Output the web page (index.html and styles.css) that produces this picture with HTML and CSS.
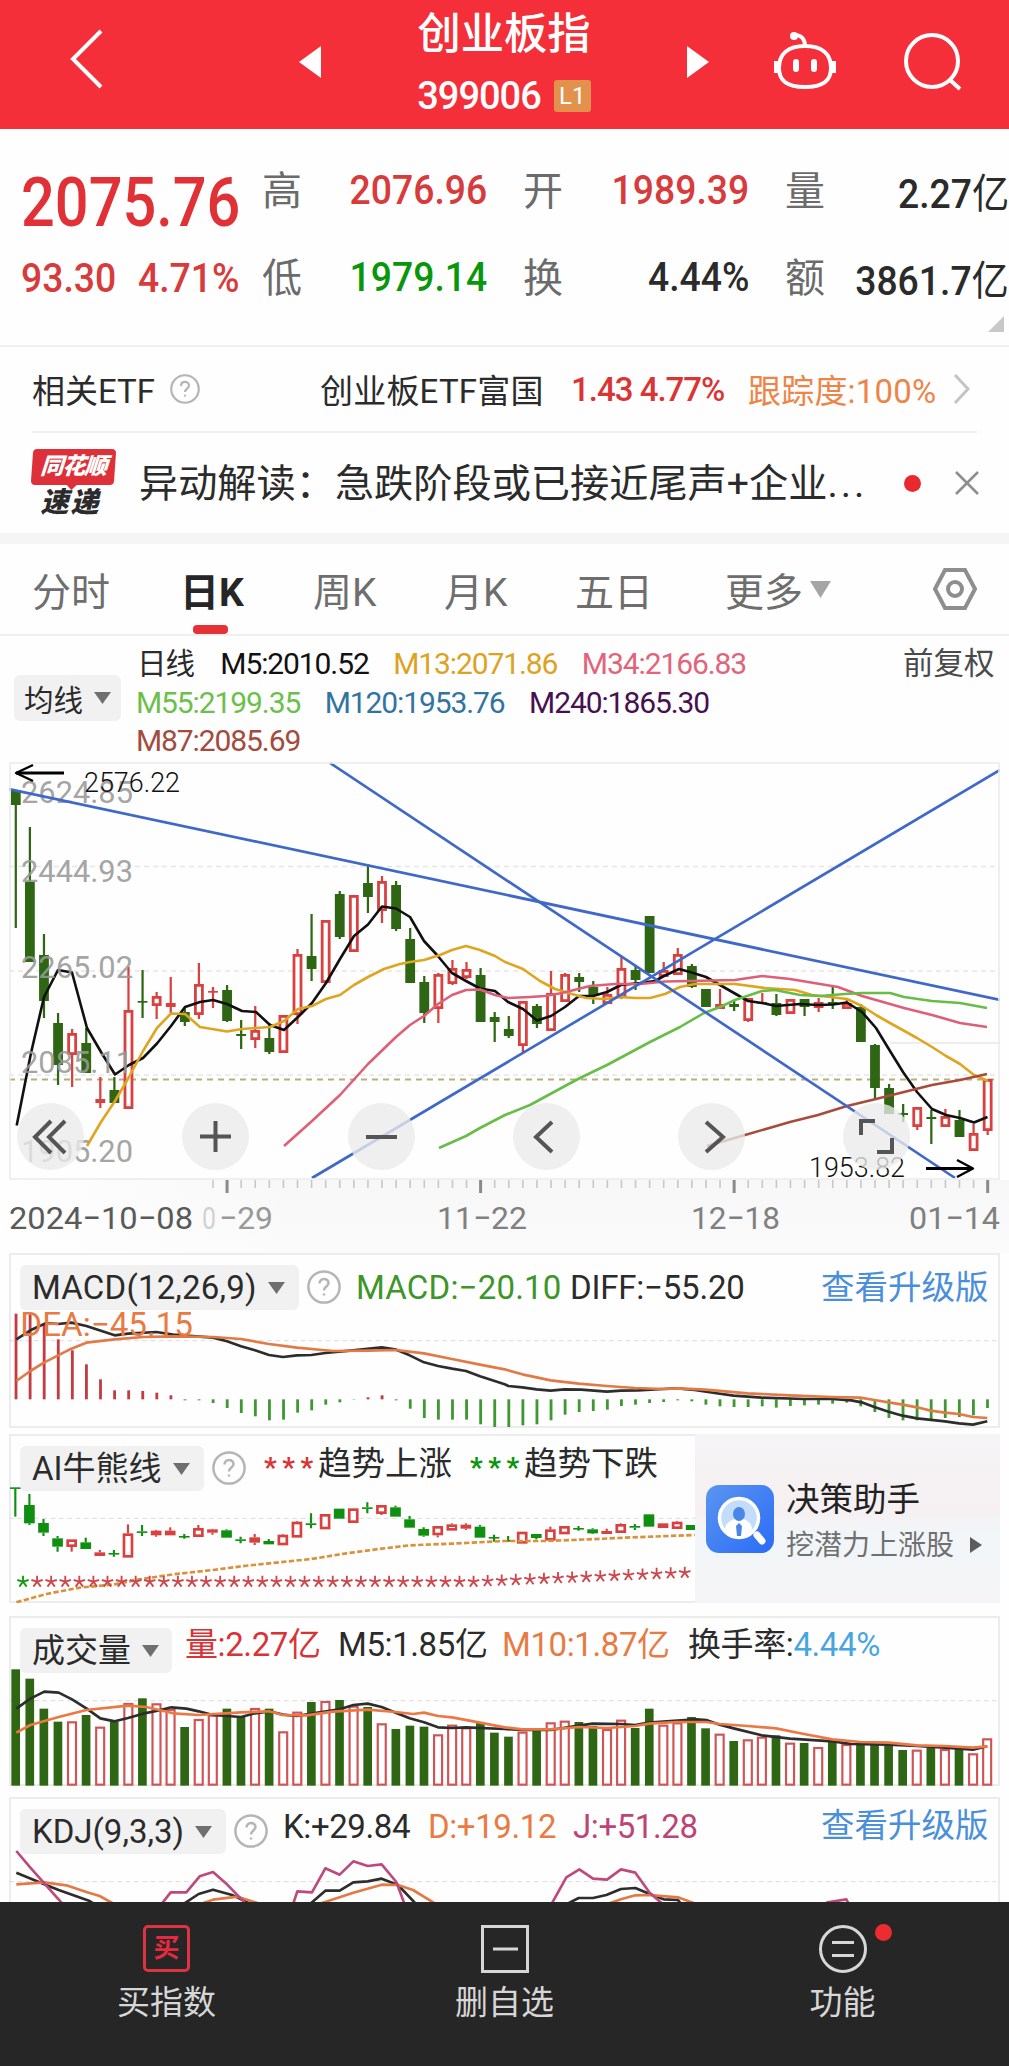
FILE: index.html
```html
<!DOCTYPE html>
<html lang="zh-CN">
  <head>
    <meta charset="utf-8">
    <title>创业板指 399006</title>
    <link rel="stylesheet" href="styles.css">
  </head>

  <body>
    <header class="topbar">
      <svg class="back" viewBox="0 0 36 62"><path d="M32 3L4 31L32 59" /></svg>
      <svg class="prev" viewBox="0 0 22 32"><path d="M22 0V32L0 16Z" /></svg>
      <div class="title">
        <h1>创业板指</h1>
        <div class="code"><span>399006</span><em>L1</em></div>
      </div>
      <svg class="next" viewBox="0 0 22 32"><path d="M0 0V32L22 16Z" /></svg>
      <svg class="robot" viewBox="0 0 66 60">
        <path d="M33 15C33 8 29 4 23 4" />
        <path d="M33 15C50 15 59 23 59 37C59 50 51 56 33 56C15 56 7 50 7 37C7 23 16 15 33 15Z" />
        <path d="M4 30V42M62 30V42" />
        <path class="eye" d="M24 31V38M42 31V38" />
        <circle class="tip" cx="22" cy="5" r="4" />
      </svg>
      <svg class="search" viewBox="0 0 60 60"><circle cx="29" cy="29" r="26" /><path d="M47 48L57 57" /></svg>
    </header>

    <section class="quote">
      <div class="cell"><b class="big">2075.76</b></div>
      <div class="cell"><i>高</i><b class="up">2076.96</b></div>
      <div class="cell"><i>开</i><b class="up">1989.39</b></div>
      <div class="cell"><i>量</i><b>2.27<u>亿</u></b></div>
      <div class="cell change"><b class="up">93.30</b><b class="up">4.71%</b></div>
      <div class="cell"><i>低</i><b class="down">1979.14</b></div>
      <div class="cell"><i>换</i><b>4.44%</b></div>
      <div class="cell"><i>额</i><b>3861.7<u>亿</u></b></div>
      <span class="corner"></span>
    </section>

    <section class="etf">
      <span>相关ETF</span>
      <svg class="help" viewBox="0 0 34 34"><circle cx="17" cy="17" r="15.6" /><path d="M12.5 13.5C12.5 7.5 21.5 7.5 21.5 13C21.5 16.5 17 16.5 17 20.5" /><path d="M17 23.5V25.5" /></svg>
      <span class="etf-name">创业板ETF富国</span>
      <span class="etf-price">1.43 4.77%</span>
      <span class="etf-track">跟踪度:100%</span>
      <svg class="more" viewBox="0 0 18 32"><path d="M2 2L15 16L2 30" /></svg>
    </section>

    <section class="news">
      <div class="logo"><span>同花顺</span><strong>速递</strong></div>
      <p>异动解读：急跌阶段或已接近尾声+企业<span class="dots">...</span></p>
      <span class="dot"></span>
      <svg class="close" viewBox="0 0 24 24"><path d="M1 1L23 23M23 1L1 23" /></svg>
    </section>

    <nav class="tabs">
      <span>分时</span>
      <span class="active">日K</span>
      <span>周K</span>
      <span>月K</span>
      <span>五日</span>
      <span class="drop">更多<svg viewBox="0 0 21 17"><path d="M0 0H21L10.500 17Z" /></svg></span>
      <svg class="gear" viewBox="0 0 46 44"><path d="M13 3H33L43 22L33 41H13L3 22Z" /><circle cx="23" cy="22" r="7" /></svg>
    </nav>

    <section class="legend">
      <button class="chip">均线<svg viewBox="0 0 17 12"><path d="M0 0H17L8.500 12Z" /></svg></button>
      <div class="ma">
        <div><span class="day">日线</span><span class="m5">M5:2010.52</span><span class="m13">M13:2071.86</span><span class="m34">M34:2166.83</span></div>
        <div><span class="m55">M55:2199.35</span><span class="m120">M120:1953.76</span><span class="m240">M240:1865.30</span></div>
        <div><span class="m87">M87:2085.69</span></div>
      </div>
      <span class="adjust">前复权</span>
    </section>

    <section class="kline">
      <svg id="kline" viewBox="9 762 991 418"></svg>
      <div class="tools">
        <button><svg viewBox="0 0 67 67"><path d="M34 18L18 34L34 50M48 18L32 34L48 50" /></svg></button>
        <button><svg viewBox="0 0 67 67"><path d="M33.500 18V49M18 33.500H49" /></svg></button>
        <button><svg viewBox="0 0 67 67"><path d="M18 34H49" /></svg></button>
        <button><svg viewBox="0 0 67 67"><path d="M39 19L23 34L39 49" /></svg></button>
        <button><svg viewBox="0 0 67 67"><path d="M28 19L45 34L28 49" /></svg></button>
        <button><svg viewBox="0 0 67 67"><path d="M18 32V18H32M34 49H49V35" /></svg></button>
      </div>
    </section>

    <svg id="axis" class="axis" viewBox="0 1180 1009 73"></svg>

    <section class="panel macd">
      <svg id="macd" viewBox="28 38 2973 524"></svg>
      <div class="bar">
        <button class="chip">MACD(12,26,9)<svg viewBox="0 0 17 12"><path d="M0 0H17L8.500 12Z" /></svg></button>
        <svg class="help" viewBox="0 0 34 34"><circle cx="17" cy="17" r="15.6" /><path d="M12.5 13.5C12.5 7.5 21.5 7.5 21.5 13C21.5 16.5 17 16.5 17 20.5" /><path d="M17 23.5V25.5" /></svg>
        <span class="green">MACD:−20.10</span>
        <span class="diff">DIFF:−55.20</span>
        <a class="upgrade">查看升级版</a>
      </div>
    </section>

    <section class="panel bull">
      <svg id="bull" viewBox="28 582 2973 507"></svg>
      <div class="bar">
        <button class="chip">AI牛熊线<svg viewBox="0 0 17 12"><path d="M0 0H17L8.500 12Z" /></svg></button>
        <svg class="help" viewBox="0 0 34 34"><circle cx="17" cy="17" r="15.6" /><path d="M12.5 13.5C12.5 7.5 21.5 7.5 21.5 13C21.5 16.5 17 16.5 17 20.5" /><path d="M17 23.5V25.5" /></svg>
        <span class="stars red">***</span><span class="trend">趋势上涨</span>
        <span class="stars lime">***</span><span class="trend">趋势下跌</span>
      </div>
      <div class="helper">
        <svg class="app" viewBox="0 0 68 68">
          <defs>
            <linearGradient id="blue" x1="0" y1="0" x2="1" y2="1">
              <stop offset="0" stop-color="#5b95f0" />
              <stop offset="1" stop-color="#2a6cf6" />
            </linearGradient>
          </defs>
          <rect width="68" height="68" rx="13" fill="url(#blue)" />
          <circle cx="33" cy="33" r="19.500" fill="#c3dcfa" stroke="#fff" stroke-width="3.500" />
          <path d="M19 45C19 38 25 35 29 34H37C41 35 46 38 46 45C40 53 26 53 19 45Z" fill="#fff" />
          <ellipse cx="33" cy="29" rx="6" ry="7" fill="#4a86e8" />
          <path d="M33 38L36 41L35 51H31L30 41Z" fill="#4a86e8" />
          <path d="M51 50L56 56" stroke="#fff" stroke-width="7" stroke-linecap="round" />
        </svg>
        <div>
          <h2>决策助手</h2>
          <p>挖潜力上涨股<svg viewBox="0 0 12 16"><path d="M0 0L12 8L0 16Z" /></svg></p>
        </div>
      </div>
    </section>

    <section class="panel volume">
      <svg id="volume" viewBox="28 30 2973 509"></svg>
      <div class="bar">
        <button class="chip">成交量<svg viewBox="0 0 17 12"><path d="M0 0H17L8.500 12Z" /></svg></button>
        <span class="red v1">量:2.27亿</span>
        <span class="v2">M5:1.85亿</span>
        <span class="orange v3">M10:1.87亿</span>
        <span class="v4">换手率:<span class="sky">4.44%</span></span>
      </div>
    </section>

    <section class="panel kdj">
      <svg id="kdj" viewBox="28 573 2973 315"></svg>
      <div class="bar">
        <button class="chip">KDJ(9,3,3)<svg viewBox="0 0 17 12"><path d="M0 0H17L8.500 12Z" /></svg></button>
        <svg class="help" viewBox="0 0 34 34"><circle cx="17" cy="17" r="15.6" /><path d="M12.5 13.5C12.5 7.5 21.5 7.5 21.5 13C21.5 16.5 17 16.5 17 20.5" /><path d="M17 23.5V25.5" /></svg>
        <span class="k">K:+29.84</span>
        <span class="orange d">D:+19.12</span>
        <span class="plum j">J:+51.28</span>
        <a class="upgrade">查看升级版</a>
      </div>
    </section>

    <footer class="tabbar">
      <div>
        <span class="buy">买</span>
        <span>买指数</span>
      </div>
      <div>
        <svg viewBox="0 0 48 48"><rect x="1.500" y="1.500" width="45" height="45" /><path d="M12 24H37" /></svg>
        <span>删自选</span>
      </div>
      <div>
        <svg viewBox="0 0 48 48"><circle cx="24" cy="24" r="22.500" /><path d="M13 17.500H35M13 30.500H35" /></svg>
        <span>功能</span>
        <em></em>
      </div>
    </footer>

    <script src="charts.js"></script>
  </body>
</html>
```
FILE: styles.css
```css
* {
  box-sizing: border-box;
}

body {
  margin: 0;
  width: 1009px;
  height: 2066px;
  overflow: hidden;
  background: #fefefe;
  color: #2b2b2b;
  font-family: Roboto, "Noto Sans CJK SC", sans-serif;
}

svg {
  display: block;
  fill: none;
  flex: none;
}

h1,
h2,
p {
  margin: 0;
  font-weight: 400;
}

button {
  border: 0;
  padding: 0;
  font: inherit;
  color: inherit;
}

/* header */
.topbar {
  display: flex;
  height: 129px;
  padding-left: 69px;
  background: #f42f3a;
  color: #fff;
}

.topbar svg {
  stroke: #fff;
  stroke-width: 4;
}

.topbar .back {
  width: 36px;
  height: 62px;
  margin-top: 28px;
}

.topbar .prev,
.topbar .next {
  width: 22px;
  height: 32px;
  margin-top: 46px;
  fill: #fff;
  stroke: none;
}

.topbar .prev {
  margin-left: 194px;
}

.title {
  width: 366px;
  text-align: center;
}

.title h1 {
  margin-top: 6px;
  font-size: 43.3px;
  line-height: 58px;
  font-weight: 500;
}

.code {
  display: flex;
  align-items: center;
  justify-content: center;
  gap: 13px;
  height: 64px;
  font-size: 38px;
  font-weight: 500;
}

.code span {
  letter-spacing: -1px;
}

.code em {
  width: 37px;
  height: 32px;
  border-radius: 3px;
  background: #e3924e;
  font-style: normal;
  font-weight: 400;
  font-size: 24px;
  line-height: 33px;
}

.topbar .robot {
  width: 66px;
  height: 60px;
  margin: 31px 0 0 63px;
}

.robot .eye {
  stroke-width: 6;
  stroke-linecap: round;
}

.robot .tip {
  fill: #fff;
  stroke: none;
}

.topbar .search {
  width: 60px;
  height: 60px;
  margin: 32px 0 0 65px;
}

/* price block */
.quote {
  position: relative;
  display: grid;
  grid-template-columns: 262px 261px 262px 224px;
  grid-template-rows: 87px 87px;
  height: 218px;
  padding-top: 17px;
  border-bottom: 2px solid #f0f0f0;
}

.cell {
  display: flex;
  align-items: center;
  justify-content: space-between;
  padding-right: 36px;
}

.cell:nth-child(4n) {
  padding-right: 0;
}

.cell i {
  font-style: normal;
  font-size: 40px;
  color: #6b6b6b;
  margin-top: -4px;
}

.cell b {
  font-size: 41px;
  font-weight: 500;
  white-space: nowrap;
  transform: scaleX(0.91);
  transform-origin: right;
}

.cell u {
  display: inline-block;
  font-size: 41px;
  text-decoration: none;
  font-weight: 400;
}

.cell .big {
  margin-top: 26px;
  padding-left: 21px;
  font-size: 68px;
  line-height: 68px;
  color: #e03236;
  transform: scaleX(0.875);
  transform-origin: 21px 50%;
}

.change {
  justify-content: flex-start;
  padding: 3px 0 0 21px;
}

.change b {
  width: 117px;
  transform-origin: left;
}

.cell .up {
  color: #d83b3b;
}

.cell .down {
  color: #0a960a;
}

.corner {
  position: absolute;
  right: 5px;
  bottom: 13px;
  border: 8px solid #c8c8c8;
  border-top-color: transparent;
  border-left-color: transparent;
}

/* etf line */
.etf {
  display: flex;
  align-items: center;
  height: 86px;
  margin: 0 32px;
  border-bottom: 2px solid #f0f0f0;
  font-size: 33px;
  white-space: nowrap;
}

.help {
  width: 34px;
  height: 34px;
  stroke: #b5b5b5;
  stroke-width: 2.5;
}

.etf .help {
  width: 30px;
  height: 30px;
  margin-left: 15px;
}

.etf-name {
  width: 251px;
  margin-left: 120px;
  letter-spacing: 0.2px;
}

.etf-price {
  width: 177px;
  color: #d93535;
  font-weight: 500;
  letter-spacing: -1px;
}

.etf-track {
  width: 205px;
  color: #ee8548;
  letter-spacing: 0.2px;
}

.etf .more {
  width: 18px;
  height: 32px;
  stroke: #c4c4c4;
  stroke-width: 3;
}

/* news line */
.news {
  display: flex;
  align-items: center;
  height: 111px;
  padding-left: 32px;
  border-bottom: 11px solid #f5f5f5;
}

.logo {
  width: 83px;
  height: 68px;
  font-style: italic;
  text-align: center;
}

.logo span,
.logo strong {
  display: block;
  font-weight: 900;
}

.logo span {
  position: relative;
  height: 36px;
  border-radius: 4px;
  background: #dd3038;
  color: #fff;
  font-size: 23px;
  line-height: 36px;
  letter-spacing: -1px;
  transform: skewX(-4deg);
}

/* speech bubble tail */
.logo span::after {
  content: "";
  position: absolute;
  left: 36px;
  top: 36px;
  border: 5px solid transparent;
  border-top-color: #dd3038;
  border-bottom: 0;
}

.logo strong {
  padding-right: 6px;
  font-size: 28px;
  line-height: 36px;
  letter-spacing: 2px;
}

.news p {
  width: 779px;
  padding: 2px 0 0 24px;
  font-size: 39.2px;
  line-height: 56px;
  white-space: nowrap;
}

.news .dots {
  letter-spacing: 3px;
}

.news .dot {
  width: 17px;
  height: 17px;
  margin: 0 34px 0 10px;
  border-radius: 50%;
  background: #e8292f;
}

.close {
  width: 24px;
  height: 24px;
  stroke: #8d8d8d;
  stroke-width: 2.5;
}

/* period tabs */
.tabs {
  display: grid;
  grid-template-columns: 148px 133px 131px 131px 150px 207px 46px;
  align-items: center;
  height: 92px;
  padding-left: 32px;
  border-bottom: 2px solid #efefef;
  font-size: 39px;
  color: #6e6e6e;
}

.tabs .active {
  display: grid;
  height: 90px;
  align-content: center;
  position: relative;
  color: #262626;
  font-weight: 700;
}

.tabs .active::after {
  content: "";
  position: absolute;
  left: 13px;
  bottom: 0;
  width: 35px;
  height: 9px;
  border-radius: 4px;
  background: #e53234;
}

.drop {
  display: flex;
  align-items: center;
  gap: 7px;
}

.drop svg {
  width: 21px;
  height: 17px;
  fill: #a5a5a5;
}

.gear {
  width: 46px;
  height: 44px;
  stroke: #8e8e8e;
  stroke-width: 4;
}

/* moving averages */
.legend {
  display: flex;
  height: 126px;
  padding: 8px 0 0 14px;
}

.chip {
  display: flex;
  align-items: center;
  background: #f1f1f1;
  border-radius: 6px;
  white-space: nowrap;
}

.chip svg {
  width: 17px;
  height: 12px;
  margin-left: 11px;
  fill: #6f6f6f;
}

.legend .chip {
  width: 107px;
  height: 46px;
  margin: 31px 15px 0 0;
  padding-left: 10px;
  font-size: 29.5px;
}

.ma {
  width: 767px;
  font-size: 30px;
  font-weight: 450;
  letter-spacing: -1.1px;
}

.ma div {
  display: flex;
  height: 38.7px;
  line-height: 40px;
  gap: 24.5px;
}

.ma .day {
  font-weight: 400;
  font-size: 29.5px;
  margin: 0 2px 0 1px;
}

.m5 { color: #111; }
.m13 { color: #dca322; }
.m34 { color: #e2637a; }
.m55 { color: #6cc04a; }
.m120 { color: #3274a1; }
.m240 { color: #47104f; }
.m87 { color: #a34c3e; }

.adjust {
  font-size: 30.5px;
  line-height: 39px;
  color: #4a4a4a;
}

/* charts */
.kline {
  position: relative;
  margin-left: 9px;
  height: 418px;
}

#kline {
  width: 991px;
  height: 418px;
}

#kline text,
#axis text {
  font-family: Roboto, sans-serif;
}

.tools {
  position: absolute;
  left: 8px;
  top: 341px;
  display: flex;
  gap: 98.3px;
}

.tools button {
  width: 67px;
  height: 67px;
  border-radius: 50%;
  background: rgba(234, 234, 234, 0.78);
}

.tools svg {
  stroke: #555;
  stroke-width: 4;
}

.axis {
  width: 1009px;
  height: 73px;
  background: linear-gradient(to right, #fefefe, rgba(254, 254, 254, 0) 30%), linear-gradient(#f7f7f7, #fbfbfb);
}

.panel {
  display: grid;
  width: 991px;
  margin-left: 9px;
  background: #fefefe;
  border: 2px solid #ececec;
}

.panel > * {
  grid-area: 1 / 1;
}

.panel > svg {
  margin: -2px;
  width: 991px;
}

.bar {
  display: flex;
  align-items: flex-start;
  padding: 10px 0 0 9px;
  height: 56px;
  font-size: 33px;
  line-height: 45px;
  white-space: nowrap;
}

.bar .chip {
  height: 45px;
  padding-left: 12px;
  line-height: 47px;
}

.bar .help {
  margin: 5px 0 0 8px;
}

.macd {
  height: 175px;
  margin-bottom: 6px;
}

.macd .chip {
  width: 279px;
  letter-spacing: 0.2px;
}

.green {
  width: 214px;
  margin-left: 15px;
  color: #3c9628;
  letter-spacing: 0.2px;
}

.diff {
  width: 251px;
  letter-spacing: -0.2px;
}

.upgrade {
  color: #4a8fdc;
  font-size: 33.5px;
}

.bull {
  height: 169px;
  margin-bottom: 13px;
}

.bull .chip {
  width: 184px;
}

.stars {
  width: 54px;
  margin-left: 18px;
  font-size: 28px;
  line-height: 44px;
  font-weight: 700;
  letter-spacing: 5.5px;
}

.trend {
  line-height: 35px;
  font-size: 33.5px;
}

.red {
  color: #d93338;
}

.lime {
  color: #0a960a;
}

.orange {
  color: #e87a42;
}

.plum {
  color: #bd4476;
}

.sky {
  color: #47a6de;
}

.helper {
  display: flex;
  align-items: center;
  width: 305px;
  margin: -2px 0 -2px 684px;
  padding-left: 11px;
  background: linear-gradient(#f5f4f6, #f6f0f2 45%, #f1f6f8 60%, #f5f4f6);
}

.helper .app {
  width: 68px;
  height: 68px;
}

.helper div {
  margin-left: 12px;
  padding-top: 9px;
  white-space: nowrap;
}

.helper h2 {
  font-size: 33.5px;
  line-height: 46px;
  color: #222;
}

.helper p {
  display: flex;
  align-items: center;
  font-size: 28px;
  line-height: 46px;
  color: #707070;
}

.helper p svg {
  width: 12px;
  height: 16px;
  margin: 0 0 2px 16px;
  fill: #5c5c5c;
}

.volume {
  height: 170px;
  margin-bottom: 11px;
}

.volume .chip {
  width: 152px;
}

.volume .bar > span {
  line-height: 33px;
  letter-spacing: -0.4px;
}

.v1 {
  width: 153px;
  margin-left: 13px;
}

.v2 {
  width: 164px;
}

.v3 {
  width: 186px;
}

.kdj {
  height: 105px;
  border-bottom: 0;
}

.kdj .chip {
  width: 206px;
}

.kdj .bar > span {
  line-height: 35px;
  letter-spacing: -0.4px;
}

.kdj .upgrade {
  line-height: 34px;
}

.k {
  width: 145px;
  margin-left: 15px;
}

.d {
  width: 145px;
}

.j {
  width: 248px;
}

/* bottom bar */
.tabbar {
  position: relative;
  display: grid;
  grid-template-columns: repeat(3, 338px);
  justify-content: center;
  height: 165px;
  padding-top: 23px;
  background: #262626;
  color: #d6d6d6;
  font-size: 33px;
}

.tabbar div {
  position: relative;
  display: flex;
  flex-direction: column;
  align-items: center;
  gap: 3px;
}

.tabbar svg {
  width: 48px;
  height: 48px;
  stroke: #d6d6d6;
  stroke-width: 3;
}

.tabbar .buy {
  width: 47px;
  height: 47px;
  margin-bottom: 1px;
  border: 3px solid #dc3440;
  border-radius: 5px;
  color: #e52a40;
  font-size: 26px;
  font-weight: 700;
  line-height: 40px;
  text-align: center;
}

.tabbar em {
  position: absolute;
  left: 201px;
  top: -1px;
  width: 17px;
  height: 17px;
  border-radius: 50%;
  background: #ed2c30;
}
```
FILE: charts.js
```js
const RED = "#d8413f";
const GREEN = "#2f6614";

function pt(tag, attrs) {
  const parts = Object.entries(attrs).map(([k, v]) => `${k}="${v}"`);
  return `<${tag} ${parts.join(" ")} />`;
}

function line(points, color, width, extra) {
  return `<polyline points="${points}" stroke="${color}" stroke-width="${width}" stroke-linejoin="round" ${extra || ""} />`;
}

function label(x, y, w, size, color, text, extra) {
  return `<text x="${x}" y="${y}" textLength="${w}" lengthAdjust="spacingAndGlyphs" font-size="${size}" fill="${color}" ${extra || ""}>${text}</text>`;
}

// one row per day: colour, high, body top, body bottom, low
function candles(rows, x0, step, w, stroke, green) {
  return rows
    .map((row, i) => {
      const [c, hi, top, bottom, lo] = row;
      const x = x0 + step * i;
      const color = c === "r" ? RED : green;
      let out = pt("path", {
        d: `M${x} ${hi}V${top}M${x} ${bottom}V${lo}`,
        stroke: color,
        "stroke-width": stroke * 0.8,
      });
      if (c === "r" && bottom - top > stroke * 2) {
        out += pt("rect", {
          x: x - w / 2 + stroke / 2, y: top + stroke / 2,
          width: w - stroke, height: bottom - top - stroke,
          fill: "#fff", stroke: color, "stroke-width": stroke,
        });
      } else {
        out += pt("rect", { x: x - w / 2, y: top, width: w, height: Math.max(bottom - top, stroke * 0.6), fill: color });
      }
      return out;
    })
    .join("");
}

function parse(text) {
  return text.split(";").map((r) => {
    const p = r.trim().split(" ");
    return [p[0], ...p.slice(1).map(Number)];
  });
}

const days = parse(
  "g 790 790 805 928;g 827 882 962 962;g 934 955 1001 1018;g 1013 1023 1065 1085;r 1029 1033 1055 1087;g 1028 1043 1073 1073;" +
  "r 1077 1099 1103 1108;g 1077 1090 1103 1103;r 967 1010 1109 1109;g 970 1001 1002 1018;r 992 996 1006 1019;r 977 1003 1007 1013;" +
  "g 1008 1012 1022 1026;r 963 984 1015 1019;r 987 991 992 1008;g 985 990 1021 1022;g 1020 1034 1036 1049;r 1006 1030 1040 1048;" +
  "g 1023 1038 1052 1054;r 1015 1015 1053 1053;r 949 954 1015 1024;g 914 956 969 981;r 920 920 983 983;g 891 894 937 939;" +
  "r 895 895 952 952;g 864 883 897 913;r 876 881 911 923;g 881 885 929 931;g 928 939 983 983;g 976 982 1013 1023;" +
  "r 973 974 1009 1023;r 960 968 984 985;r 962 969 978 979;g 968 975 1022 1022;g 1012 1017 1022 1042;g 1016 1029 1036 1038;" +
  "r 1001 1001 1046 1052;g 1004 1006 1024 1028;r 971 993 1031 1031;r 973 974 1002 1002;g 973 977 982 992;g 981 987 996 1004;" +
  "r 987 994 1004 1004;r 957 968 998 999;g 966 970 980 990;g 916 916 973 973;r 962 970 977 977;r 948 954 975 975;" +
  "g 964 966 987 988;g 989 989 1007 1007;r 989 1004 1009 1009;g 1000 1004 1007 1011;r 998 998 1021 1022;r 993 1002 1004 1004;" +
  "g 994 1003 1015 1016;r 999 999 1014 1014;g 999 999 1007 1016;r 998 1002 1008 1012;g 987 1002 1004 1009;r 998 1003 1009 1009;" +
  "g 1004 1007 1042 1042;g 1044 1045 1088 1099;g 1084 1088 1114 1114;g 1104 1113 1115 1122;r 1107 1107 1127 1130;g 1110 1117 1119 1144;" +
  "r 1109 1116 1127 1127;g 1110 1120 1137 1137;r 1124 1133 1151 1151;r 1079 1079 1131 1135"
);

let k = "";
[866.5, 971, 1075].forEach((y) => {
  k += line(`9,${y} 998,${y}`, "#e6e6e6", 1.5, 'stroke-dasharray="5 4"');
});
k += line("890,1043 1000,1043", "#e8e8e8", 1.5);
k += line("9,1079.500 998,1079.500", "#b5b07c", 2, 'stroke-dasharray="6 5"');
k += candles(days, 15.800, 14.085, 9.800, 2.800, GREEN);
k += line("16.7,1125.5 31,1053 44,997 58,970 72,972.5 87,1028 101,1052 115,1074.5 129,1065 143,1058 157,1043.5 171,1026 185,1007 200,1002 213,1000 227,1004 242,1011 256,1012 270,1025 284,1030 298,1017 312,1003 326,983 340,959 354,936 368,924.5 382,906.5 396,908.5 410,917 424,941 437,955 452,973 466,981 480,988.5 495,991 508,1002 523,1009 537,1020.5 551,1016 565,1007 579,996 593,996 607,992 621,985 640,983 655,981 664,976 679,969 690,972 706,977 720,985 734,993 748,1001 762,1003 776,1006 800,1004 818,1005 833,1004.5 847,1002.5 862,1012 876,1028 890,1051 903,1072 917,1092 932,1109 946,1115 960,1118 974,1122.5 987.5,1117", "#111", 2.6);
k += line("87,1146 101,1122 115,1101 129,1077 143,1051 157,1028 171,1013.5 185,1014 200,1027 227,1031.5 242,1029 256,1028 270,1027 284,1021 298,1009 312,1006 326,999 340,995 354,985 368,977 384,969 400,964 410,962 424,960 440,955 452,950 466,946 480,950 495,956 505,962 523,969 540,981 555,989 572,994 586,998 605,999 620,997 635,998 650,998 665,994 680,987 695,984 735,984 765,988 795,990 812,995 830,997 847,999 862,1006 876,1015 890,1023 917,1038 932,1047 946,1056 960,1064 974,1075 988,1081", "#dfa520", 2.6);
k += line("284,1146 312,1121 340,1095 368,1064 396,1037 410,1025 424,1016 438,1004 452,995 466,990 480,989.5 495,995 508,998 530,997 545,996 562,993 590,986 615,984 640,984 665,981.5 690,981 735,980 762,976 790,979 820,984 838,987 862,996 876,1000 904,1008 932,1015 960,1023 987,1027", "#de5f78", 2.6);
k += line("439,1148 466,1136 480,1128 505,1115 530,1105 565,1086 580,1078 607,1065 650,1042 680,1027 704,1013 720,1007 735,1000 762,991 775,990 800,995 820,996 845,994 862,993 890,993 904,997 932,1001 960,1003 987,1008", "#67bd48", 2.6);
k += line("707,1146 745,1135 790,1122 818,1115 847,1106 876,1099 904,1092 932,1085 960,1080 987,1074", "#a84b3c", 2.6);
// price scale
[[802.5, "2624.85"], [882, "2444.93"], [977.5, "2265.02"], [1073, "2085.11"], [1161.5, "1905.20"]].forEach(([y, t]) => {
  k += label(21, y, 112, 32, "#999", t, 'font-weight="450" fill-opacity="0.9"');
});
// trend lines
k += line("9,789 1000,1000", "#3f68c8", 2.7);
k += line("330,763 955,1178", "#3f68c8", 2.7);
k += line("312,1178 1000,770", "#3f68c8", 2.7);
k += label(84, 792, 96, 28.500, "#111", "2576.22", 'font-weight="350"');
k += line("64,773 16,773", "#000", 2.8);
k += line("33,765 16,773 33,781", "#000", 2.4);
k += label(809, 1177, 96, 28.500, "#111", "1953.82", 'font-weight="350"');
k += line("926,1168.500 973,1168.500", "#000", 2.8);
k += line("957,1160 973,1168.500 957,1177", "#000", 2.4);
k += pt("rect", { x: 10, y: 763, width: 989, height: 416, stroke: "#ececec", "stroke-width": 1.6 });
document.getElementById("kline").innerHTML = k;

let a = "";
for (let i = 14; i < 70; i++) {
  const x = 15.800 + 14.085 * i;
  const big = (i - 15) % 18 === 0;
  a += line(`${x},1179 ${x},${big ? 1193 : 1188}`, big ? "#8a8a8a" : "#c8c8c8", big ? 3 : 1.6);
}
a += label(202, 1229, 14, 32, "#d2d2d2", "0", 'font-weight="450"');
a += label(219, 1229, 54, 32, "#999", "−29", 'font-weight="450"');
a += label(9, 1229, 184, 32, "#5a5a5a", "2024−10−08", 'font-weight="450"');
a += label(437, 1229, 90, 32, "#808080", "11−22", 'font-weight="450"');
a += label(691, 1229, 89, 32, "#808080", "12−18", 'font-weight="450"');
a += label(909, 1229, 91, 32, "#808080", "01−14", 'font-weight="450"');
document.getElementById("axis").innerHTML = a;

// the small panels are drawn at three units per pixel
const X0 = 48;
const STEP = 42.240;
const dash = (y) => line(`28,${y} 2990,${y}`, "#dcdcdc", 3, 'stroke-dasharray="14 11"');

const hist = [220, 222, 250, 297, 330, 372, 417, 450, 450, 452, 457, 465, 480, 480, 488, 503, 518, 528, 540, 538, 517, 510, 493, 486, 478, 471, 465, 480, 505, 533, 538, 538, 538, 552, 560, 560, 555, 552, 540, 523, 515, 512, 508, 497, 493, 488, 485, 480, 483, 493, 498, 500, 500, 498, 502, 497, 495, 493, 490, 487, 498, 515, 533, 540, 540, 537, 533, 530, 525, 503];
let m = dash(301);
hist.forEach((y, i) => {
  const x = X0 + 1 + STEP * i;
  m += line(`${x},477 ${x},${y}`, y < 477 ? "#c23c42" : "#3f9932", 8.5);
});
m += line("50,297 92,270 140,248 175,251 215,247 260,257 345,285 385,280 470,275 520,283 640,292 682,303 724,318 766,330 808,344 850,350 892,345 935,344 977,338 1060,330 1146,321 1190,328 1230,345 1273,366 1315,377 1357,385 1399,392 1441,408 1515,432 1526,437 1568,441 1611,447 1653,451 1695,447 1745,448 1822,454 1864,451 1915,450 1991,446 2033,444 2085,449 2145,458 2202,466 2286,472 2413,476 2498,476 2555,480 2590,487 2624,500 2667,514 2709,526 2752,534 2836,543 2878,549 2920,553 2963,543", "#2d2d2d", 8);
m += line("50,422 92,392 134,366 215,325 260,307 345,297 430,290 520,288 640,290 724,296 808,311 892,322 1000,332 1104,331 1188,329 1273,339 1357,356 1441,373 1515,387 1568,402 1653,420 1737,430 1822,437 1906,443 1991,446 2035,444 2117,448 2244,459 2371,465 2498,470 2582,472 2624,479 2667,486 2709,493 2752,501 2793,511 2836,517 2878,521 2920,530 2963,533", "#e27a45", 8);
m += label(62, 288, 518, 100, "#e87a42", "DEA:−45.15", 'font-weight="450"');
document.getElementById("macd").innerHTML = m;

const small = parse(
  "g 742 742 746 830;g 762 795 850 855;g 837 849 878 888;g 888 895 920 935;r 898 898 921 935;g 893 907 927 927;r 930 937 948 948;" +
  "g 930 939 943 950;r 853 880 953 953;g 855 874 878 888;r 870 872 886 890;r 862 872 886 886;g 882 888 891 896;r 855 864 891 891;" +
  "r 866 868 878 884;g 868 871 893 893;g 890 898 901 910;r 882 892 908 915;g 897 903 913 913;r 882 884 916 916;r 843 845 893 893;" +
  "g 820 850 855 865;r 822 822 868 868;g 806 806 836 836;r 805 805 849 849;g 787 802 806 820;r 795 795 822 825;g 797 802 830 830;" +
  "g 828 838 863 863;g 862 867 887 890;r 858 858 886 892;r 850 853 872 872;r 850 854 866 870;g 855 860 893 893;g 884 891 893 905;" +
  "g 888 900 903 905;r 875 875 911 911;g 882 882 894 898;r 860 868 902 902;r 858 858 883 883;g 858 864 867 872;g 865 868 880 882;" +
  "r 866 873 882 882;r 850 852 879 879;g 852 858 863 870;g 823 823 860 860;r 850 850 864 864;r 843 845 867 867;g 855 855 870 870"
);
let b = dash(835);
b += candles(small, X0 - 1, STEP, 32, 8, "#0f8f0f");
b += line("50,1087 140,1062 240,1043 345,1033 420,1018 520,1003 640,990 724,979 808,970 935,957 1040,940 1146,926 1230,916 1357,911 1515,903 1640,903 1766,898 1900,892 2085,885", "#d9923c", 8, 'stroke-dasharray="16 7"');
for (let i = 0; i < 48; i++) {
  const x = 70 + STEP * i;
  const y = i < 32 ? 1025 : 1025 - (i - 32) * 1.8;
  b += `<path transform="translate(${x} ${y})" d="M0 -18V0M-17 -5L0 0L17 -5M-11 15L0 0L11 15" stroke="${i ? "#cc474b" : "#0f9a0f"}" stroke-width="5.5" />`;
}
document.getElementById("bull").innerHTML = b;

const vol = parse(
  "g 190;g 218;g 308;g 347;r 347;g 327;r 363;g 347;r 292;g 277;r 293;r 310;g 363;r 340;r 327;g 308;g 330;r 307;g 308;r 377;r 318;g 288;r 286;g 282;" +
  "r 300;g 303;r 353;g 369;g 359;g 362;r 386;r 357;r 365;g 350;g 380;g 392;r 378;g 374;r 350;r 345;g 348;g 360;r 370;r 342;g 366;g 308;r 357;r 350;" +
  "g 333;g 367;r 384;g 405;r 401;r 393;g 388;r 411;g 411;r 424;g 405;r 415;g 413;g 417;g 415;g 432;r 432;g 424;r 430;g 428;r 443;r 398"
);
let v = dash(284);
vol.forEach(([c, y], i) => {
  const x = X0 + STEP * i;
  v += c === "r"
    ? pt("rect", { x: x - 12, y: y + 2, width: 24, height: 534 - y, fill: "#fff", stroke: "#cf5456", "stroke-width": 6.5 })
    : pt("rect", { x: x - 13, y: y, width: 26, height: 539 - y, fill: GREEN });
});
v += line("50,308 92,278 134,257 177,260 217,280 260,307 302,337 345,346 385,336 430,323 470,315 515,304 560,308 597,316 640,327 724,333 766,322 808,316 850,326 892,330 935,323 1020,310 1061,297 1104,293 1146,303 1188,320 1230,337 1273,349 1315,364 1357,366 1399,364 1515,369 1568,372 1653,372 1737,359 1779,353 1864,354 1906,357 1948,350 2033,344 2090,340 2120,342 2160,356 2205,368 2286,388 2371,398 2498,406 2555,414 2667,416 2752,420 2836,425 2920,431 2963,421", "#2d2d2d", 8);
v += line("50,380 92,357 177,333 260,312 385,299 440,303 520,322 597,327 724,319 808,316 850,327 920,328 1000,317 1104,311 1188,318 1240,324 1273,320 1315,330 1357,334 1441,350 1515,364 1568,370 1653,370 1737,363 1822,366 1906,360 1948,353 2033,348 2120,348 2160,354 2244,360 2329,367 2413,384 2498,400 2582,408 2667,410 2752,418 2836,420 2920,425 2963,421", "#ec7843", 8);
document.getElementById("volume").innerHTML = v;

let j = dash(827);
["50,800 134,835 177,852 270,885 300,905", "550,895 597,864 640,851 700,868 745,890 770,905", "930,895 977,854 1020,854 1061,829 1104,826 1146,818 1195,837 1250,895", "1700,895 1737,876 1780,876 1820,867 1864,849 1907,846 1950,864 1992,880 2035,882 2045,895"].forEach((p) => {
  j += line(p, "#2d2d2d", 8);
});
["50,835 134,829 200,838 260,858 300,870 345,895", "600,895 640,881 714,872 785,895", "955,895 1061,860 1146,836 1195,837 1240,852 1310,895", "1820,895 1864,880 1907,868 1950,867 2035,874 2095,896"].forEach((p) => {
  j += line(p, "#e27a45", 8);
});
["50,735 92,785 134,832 190,895", "485,895 513,859 560,859 600,811 640,798 680,833 740,895", "880,895 893,856 937,859 977,787 1020,806 1061,766 1104,780 1146,775 1190,828 1215,895", "1655,895 1700,814 1739,790 1780,818 1822,821 1864,790 1907,800 1950,860 1990,895", "2480,890 2540,880 2548,895"].forEach((p) => {
  j += line(p, "#bd4a7c", 8);
});
document.getElementById("kdj").innerHTML = j;
```
